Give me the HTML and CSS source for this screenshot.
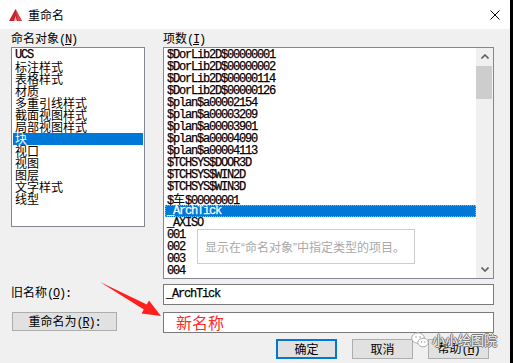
FILE: index.html
```html
<!DOCTYPE html>
<html>
<head>
    <title>重命名</title>
    <link rel="stylesheet" href="styles.css">
</head>
<body>
<div class="dialog">
    <div class="titlebar">
        <svg class="app-icon" width="13" height="12" viewBox="0 0 13 12">
            <polygon points="6.5,0 13,12 0,12" fill="#c4262c"/>
            <polygon points="6.5,0 13,12 9,12" fill="#e0474c"/>
            <polygon points="6.5,7 8,12 5,12" fill="#f4b0b0"/>
        </svg>
        <span class="title">重命名</span>
        <svg class="close" width="10" height="10" viewBox="0 0 10 10">
            <path d="M0.5 0.5 L9.5 9.5 M9.5 0.5 L0.5 9.5" stroke="#000" stroke-width="1"/>
        </svg>
    </div>

    <div class="main">
        <div class="label">命名对象<span class="mn">(<u>N</u>)</span></div>
        <div class="label">项数<span class="mn">(<u>I</u>)</span></div>

        <div class="listbox left-list">
            <div class="items">
                <div class="item mono">UCS</div>
                <div class="item">标注样式</div>
                <div class="item">表格样式</div>
                <div class="item">材质</div>
                <div class="item">多重引线样式</div>
                <div class="item">截面视图样式</div>
                <div class="item">局部视图样式</div>
                <div class="item sel">块</div>
                <div class="item">视口</div>
                <div class="item">视图</div>
                <div class="item">图层</div>
                <div class="item">文字样式</div>
                <div class="item">线型</div>
            </div>
        </div>

        <div class="listbox right-list">
            <div class="items">
                <div class="item mono">$DorLib2D$00000001</div>
                <div class="item mono">$DorLib2D$00000002</div>
                <div class="item mono">$DorLib2D$00000114</div>
                <div class="item mono">$DorLib2D$00000126</div>
                <div class="item mono">$plan$a00002154</div>
                <div class="item mono">$plan$a00003209</div>
                <div class="item mono">$plan$a00003901</div>
                <div class="item mono">$plan$a00004090</div>
                <div class="item mono">$plan$a00004113</div>
                <div class="item mono">$TCHSYS$DOOR3D</div>
                <div class="item mono">$TCHSYS$WIN2D</div>
                <div class="item mono">$TCHSYS$WIN3D</div>
                <div class="item mono">$<span class="cjk">车</span>$00000001</div>
                <div class="item mono sel">_ArchTick</div>
                <div class="item mono">_AXISO</div>
                <div class="item mono">001</div>
                <div class="item mono">002</div>
                <div class="item mono">003</div>
                <div class="item mono">004</div>
            </div>
            <div class="scrollbar">
                <div class="sb-arrow">
                    <svg width="8" height="5" viewBox="0 0 8 5"><polyline points="0.5,4.5 4,1 7.5,4.5" fill="none" stroke="#606060" stroke-width="1.6"/></svg>
                </div>
                <div class="sb-thumb"></div>
                <div class="sb-track"></div>
                <div class="sb-arrow">
                    <svg width="8" height="5" viewBox="0 0 8 5"><polyline points="0.5,0.5 4,4 7.5,0.5" fill="none" stroke="#606060" stroke-width="1.6"/></svg>
                </div>
            </div>
            <div class="tooltip">显示在<span class="q">“</span>命名对象<span class="q">”</span>中指定类型的项目。</div>
        </div>

        <div class="old-label">旧名称<span class="mn">(<u>O</u>):</span></div>
        <div class="textbox old-name mono">_ArchTick</div>

        <button class="rename-btn">重命名为<span class="mn">(<u>R</u>):</span></button>
        <div class="textbox new-name">新名称</div>

        <div class="actions">
            <button class="btn default">确定</button>
            <button class="btn">取消</button>
            <button class="btn">帮助<span class="mn">(<u>H</u>)</span></button>
        </div>
    </div>

    <svg class="arrow" width="510" height="363" viewBox="0 0 510 363">
        <polygon points="100,282 146.8,304.6 149,300.5 161,316 141.6,313.6 143.8,309.6" fill="#ff1f1f"/>
    </svg>

    <div class="watermark">
        <svg width="18" height="16" viewBox="0 0 18 16">
            <ellipse cx="7" cy="6" rx="6.3" ry="5.2" fill="#fff" stroke="#9a9a9a" stroke-width="0.8"/>
            <ellipse cx="12" cy="10.5" rx="5.2" ry="4.3" fill="#fff" stroke="#9a9a9a" stroke-width="0.8"/>
            <circle cx="5" cy="5" r="0.8" fill="#9a9a9a"/>
            <circle cx="9" cy="5" r="0.8" fill="#9a9a9a"/>
            <circle cx="10.5" cy="10" r="0.7" fill="#9a9a9a"/>
            <circle cx="13.8" cy="10" r="0.7" fill="#9a9a9a"/>
        </svg>
        <span>小小绘图院</span>
    </div>
</div>
</body>
</html>
```

FILE: styles.css
```css
body { margin: 0; background: #000; width: 513px; height: 363px; overflow: hidden; }
.dialog { position: relative; width: 510px; height: 363px; background: #f0f0f0; font-family: "Noto Sans CJK SC", sans-serif; font-size: 12px; color: #000; overflow: hidden; }

.titlebar { height: 29px; background: #fff; display: flex; align-items: center; padding: 0 10px 0 9px; box-sizing: border-box; }
.title { margin-left: 6px; line-height: 12px; }
.close { margin-left: auto; }

.main { display: grid; grid-template-columns: 134px 331px; column-gap: 18px; padding: 3px 0 0 11px; }
.label { height: 12px; line-height: 12px; margin-bottom: 3px; white-space: nowrap; }
.mn { font-family: "Liberation Mono", monospace; letter-spacing: -1.2px; }
.mn u { text-underline-offset: 1px; }

.listbox { position: relative; background: #fff; border: 1px solid #828790; box-sizing: border-box; display: flex; }
.left-list { height: 180px; align-self: start; }
.right-list { height: 232px; }
.items { flex: 1; padding-top: 1px; overflow: hidden; }
.item { height: 12px; line-height: 12px; margin: 0 1px; padding-left: 2px; white-space: nowrap; }
.item.sel { background: #0078d7; color: #fff; }
.right-list .item { margin-right: 0; }
.right-list .item.sel { outline: 1px dotted #f39a4a; outline-offset: -1px; }
.mono { font-family: "Liberation Mono", monospace; letter-spacing: -1.2px; -webkit-text-stroke: 0.25px currentColor; }
.cjk { font-family: "Noto Sans CJK SC", sans-serif; letter-spacing: 0; -webkit-text-stroke: 0; }

.scrollbar { width: 17px; background: #f0f0f0; display: flex; flex-direction: column; }
.sb-arrow { height: 17px; display: flex; align-items: center; justify-content: center; }
.sb-thumb { height: 33px; margin: 1px 1px 0 0; background: #cdcdcd; }
.sb-track { flex: 1; }

.tooltip { position: absolute; left: 33px; top: 181px; width: 218px; height: 35px; box-sizing: border-box; border: 1px solid #cccccc; background: #fff; color: #a9a9a9; padding-left: 7px; line-height: 33px; white-space: nowrap; }
.tooltip .q { font-family: "Liberation Sans", sans-serif; }

.old-label { margin-top: 7px; line-height: 12px; white-space: nowrap; }
.textbox { height: 21px; box-sizing: border-box; border: 1px solid #7a7a7a; background: #fff; padding-left: 2px; line-height: 19px; white-space: nowrap; }
.old-name { margin-top: 5px; }
.new-name { margin-top: 7px; padding-left: 12px; font-family: "Noto Sans CJK SC", sans-serif; font-size: 16px; color: #ff2b2b; line-height: 18px; }

.rename-btn { margin: 7px 0 0 1px; width: 105px; height: 19px; padding: 0; border: 1px solid #adadad; background: #e1e1e1; font-family: "Noto Sans CJK SC", sans-serif; font-size: 12px; line-height: 16px; color: #000; }

.actions { grid-column: 1 / -1; display: flex; justify-content: flex-end; gap: 15px; margin-top: 6px; padding-right: 5px; }
.btn { width: 61px; height: 20px; padding: 0; border: 1px solid #adadad; background: #e1e1e1; font-family: "Noto Sans CJK SC", sans-serif; font-size: 12px; line-height: 16px; color: #000; box-sizing: border-box; }
.btn.default { border: 2px solid #0078d7; }

.arrow { position: absolute; left: 0; top: 0; pointer-events: none; }

.watermark { position: absolute; left: 411px; top: 332px; display: flex; align-items: center; gap: 3px; font-size: 13px; line-height: 16px; color: rgba(255, 255, 255, 0.92); text-shadow: 1px 0 0 #777, -1px 0 0 #777, 0 1px 0 #777, 0 -1px 0 #777; }
```
